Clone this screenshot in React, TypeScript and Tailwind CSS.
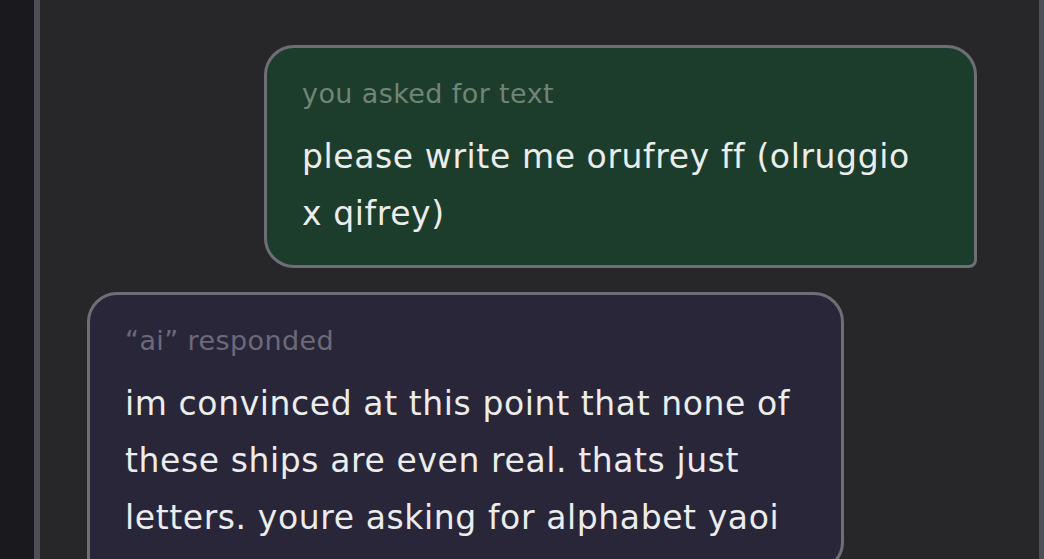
import React from 'react';

const Bubble = ({
  label,
  text,
  className,
  labelColor,
}: {
  label: string;
  text: string;
  className: string;
  labelColor: string;
}) => (
  <div className={`border-[3px] border-[#6e6f76] pt-[25px] pb-[23px] pl-[35px] ${className}`}>
    <p className={`text-[27px] leading-[42px] tracking-[0.4px] ${labelColor}`}>{label}</p>
    <p className="mt-[13px] text-[33px] leading-[57px] tracking-[0.6px] text-[#ebecec]">{text}</p>
  </div>
);

const App = () => {
  return (
    <div
      className="flex h-[559px] w-full overflow-hidden bg-[#1a1a1e]"
      style={{ fontFamily: '"DejaVu Sans", Verdana, sans-serif' }}
    >
      <div className="w-[34px] shrink-0" />
      <main className="flex flex-1 flex-col gap-[24px] border-l-[6px] border-r-[5px] border-[#4f4f56] bg-[#27272a] pt-[45px]">
        <div className="flex justify-end pr-[62px]">
          <Bubble
            label="you asked for text"
            text="please write me orufrey ff (olruggio x qifrey)"
            labelColor="text-[#6f8576]"
            className="w-[713px] rounded-[30px] rounded-br-[8px] bg-[#1c3d2c] pr-[60px]"
          />
        </div>
        <div className="flex justify-start pl-[47px]">
          <Bubble
            label={'\u201cai\u201d responded'}
            text="im convinced at this point that none of these ships are even real. thats just letters. youre asking for alphabet yaoi"
            labelColor="text-[#6c6a79]"
            className="w-[757px] shrink-0 rounded-[30px] rounded-bl-[8px] bg-[#29263a] pr-[36px]"
          />
        </div>
      </main>
    </div>
  );
};

export default App;
